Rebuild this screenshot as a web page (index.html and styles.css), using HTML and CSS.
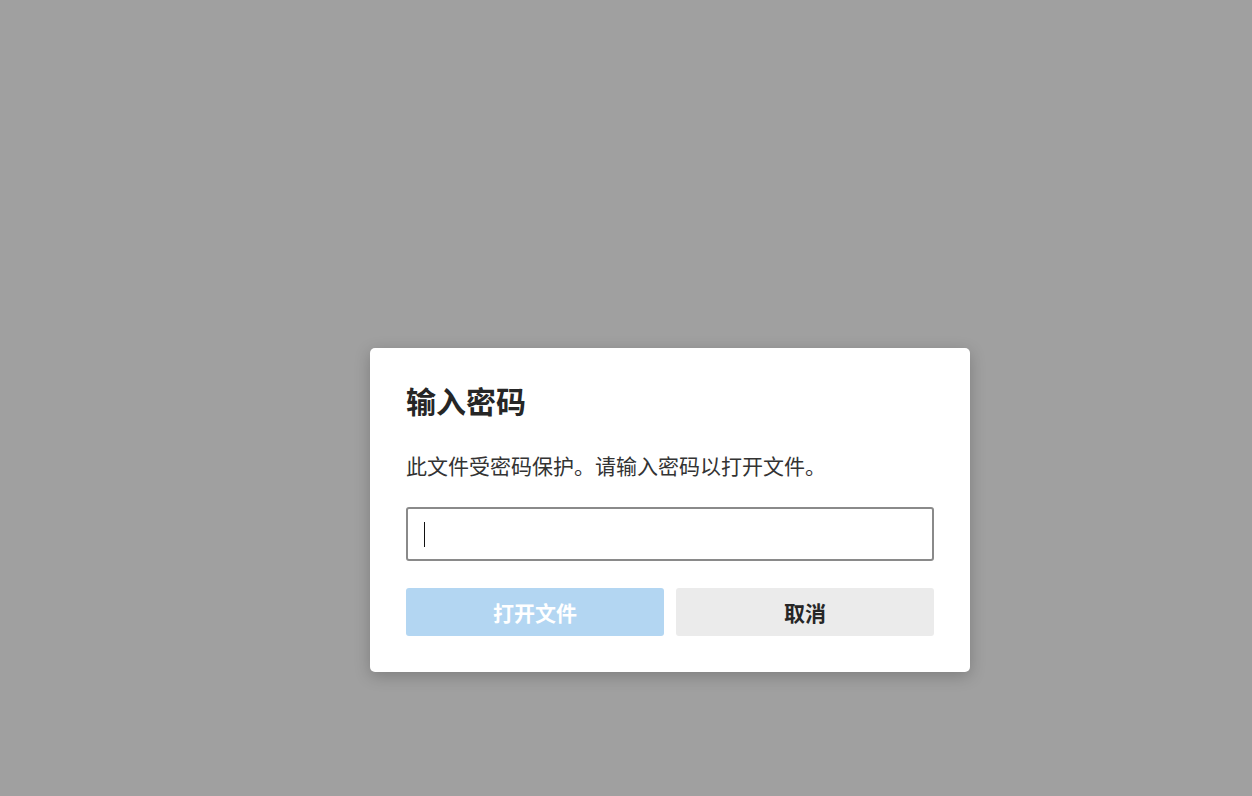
FILE: index.html
```html
<!DOCTYPE html>
<html lang="zh-CN">
<head>
<meta charset="utf-8">
<link rel="stylesheet" href="styles.css">
</head>
<body>
<div class="backdrop">
  <div class="dialog">
    <h1 class="title">输入密码</h1>
    <p class="message">此文件受密码保护。请输入密码以打开文件。</p>
    <div class="field"><span class="caret"></span></div>
    <div class="actions">
      <button class="btn btn-primary">打开文件</button>
      <button class="btn btn-secondary">取消</button>
    </div>
  </div>
</div>
</body>
</html>
```
FILE: styles.css
```css
html, body {
  margin: 0;
  padding: 0;
  height: 100%;
}
body {
  background: #a0a0a0;
  font-family: "Noto Sans CJK SC", "Noto Sans", sans-serif;
  color: #262626;
}
.backdrop {
  padding: 348px 0 0 370px;
}
.dialog {
  width: 600px;
  box-sizing: border-box;
  background: #ffffff;
  border-radius: 5px;
  padding: 30px 36px 36px;
  box-shadow: 0 4px 16px rgba(0, 0, 0, 0.22);
}
.title {
  margin: 0;
  font-size: 30px;
  font-weight: 700;
  line-height: 44px;
  color: #262626;
}
.message {
  margin: 28px 0 0;
  font-size: 21px;
  line-height: 30px;
  color: #333333;
}
.field {
  margin-top: 27px;
  height: 54px;
  box-sizing: border-box;
  border: 2px solid #8a8a8a;
  border-radius: 3px;
  display: flex;
  align-items: center;
  padding-left: 16px;
}
.caret {
  display: block;
  width: 1px;
  height: 25px;
  background: #111;
}
.actions {
  margin-top: 27px;
  display: grid;
  grid-template-columns: 1fr 1fr;
  gap: 12px;
}
.btn {
  height: 48px;
  border: none;
  border-radius: 3px;
  font-family: "Noto Sans CJK SC", "Noto Sans", sans-serif;
  font-size: 21px;
  font-weight: 700;
  padding: 0;
}
.btn-primary {
  background: #b3d6f2;
  color: #ffffff;
}
.btn-secondary {
  background: #ebebeb;
  color: #262626;
}
```
